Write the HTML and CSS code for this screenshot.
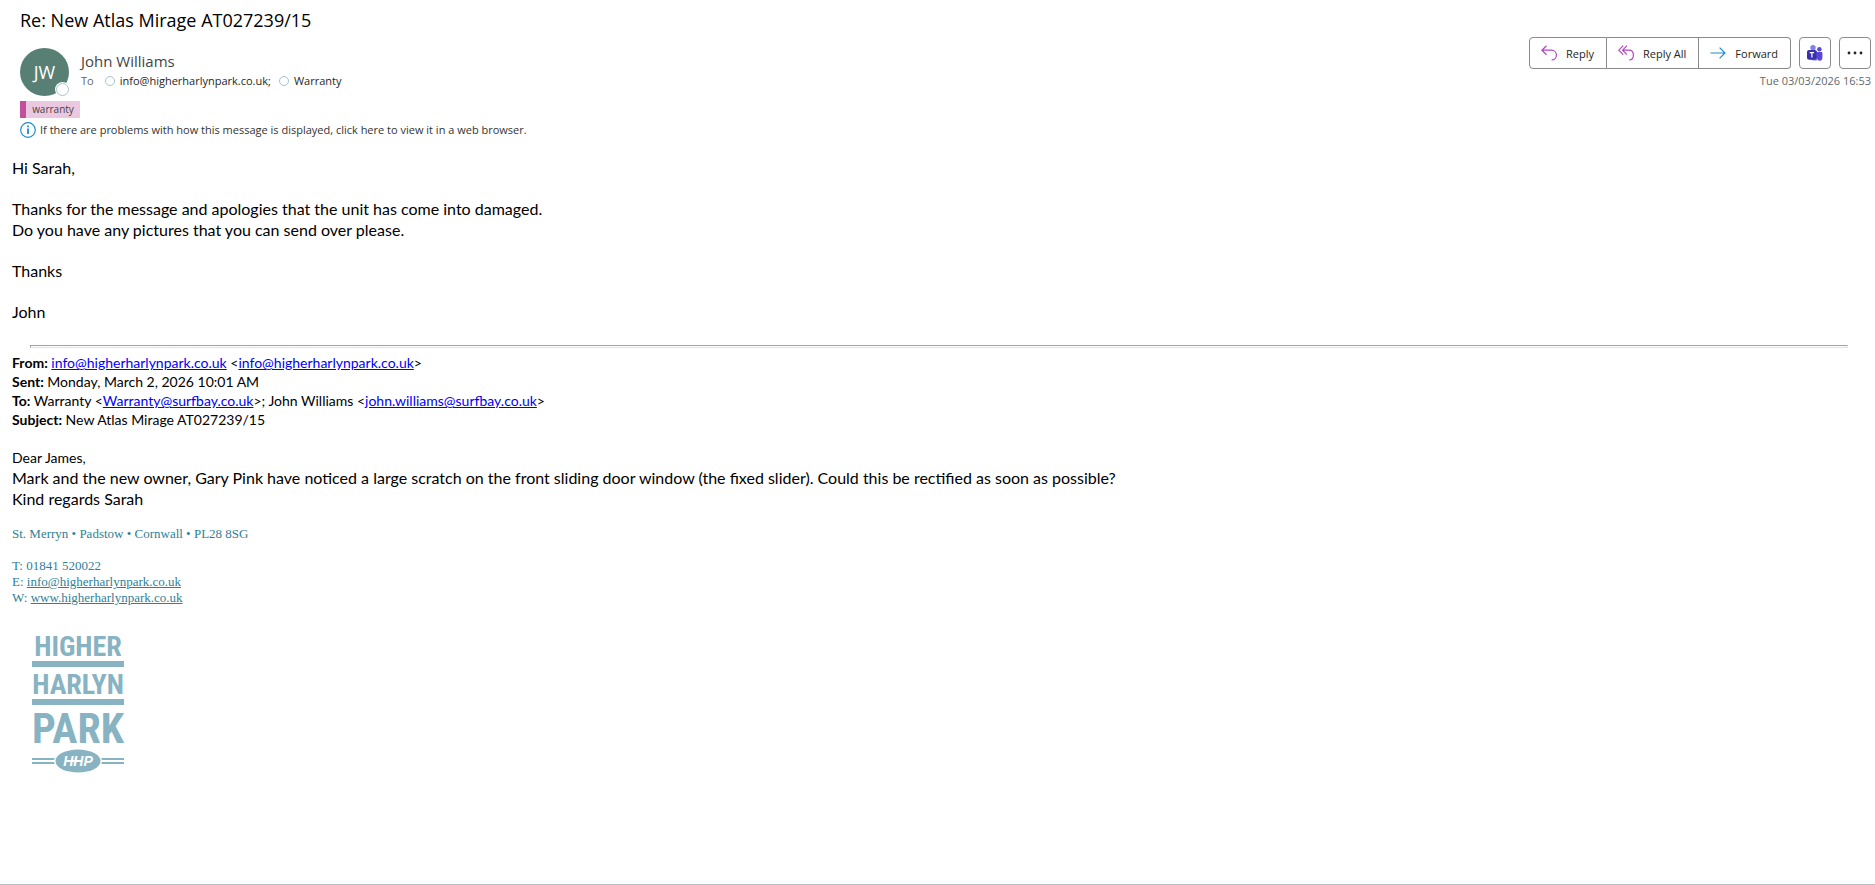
FILE: index.html
```
<!DOCTYPE html>
<html lang="en">
<head>
    <meta charset="UTF-8">
    <meta name="viewport" content="width=device-width, initial-scale=1.0">
    <title>Re: New Atlas Mirage AT027239/15</title>
    <link rel="stylesheet" href="styles.css">
</head>
<body>
    <header class="message-header">
        <h1 class="subject">Re: New Atlas Mirage AT027239/15</h1>
        <div class="header-row">
            <div class="sender">
                <div class="avatar">JW<span class="presence"></span></div>
                <div class="sender-info">
                    <div class="sender-name">John Williams</div>
                    <div class="recipients">
                        <span class="to-label">To</span>
                        <span class="dot"></span>
                        <span class="recipient">info@higherharlynpark.co.uk;</span>
                        <span class="dot"></span>
                        <span class="recipient">Warranty</span>
                    </div>
                </div>
            </div>
            <div class="header-side">
                <div class="actions">
                    <div class="button-group">
                        <button class="btn" type="button">
                            <svg class="icon" width="16" height="16" viewBox="0 0 16 16" fill="none" stroke="#b146c2" stroke-width="1.2">
                                <path d="M5.5 0.7L0.9 5.2L5.5 9.7M1 5.2H10.2C13.3 5.2 15.4 7.3 15.4 10.1C15.4 13 13.3 15 10.6 15"/>
                            </svg>
                            Reply
                        </button>
                        <button class="btn" type="button">
                            <svg class="icon" width="16" height="16" viewBox="0 0 16 16" fill="none" stroke="#b146c2" stroke-width="1.2">
                                <path d="M5.2 0.7L0.8 5.2L5.2 9.7M9 0.7L4.6 5.2L9 9.7M4.7 5.2H11C13.7 5.2 15.4 7.3 15.4 10.1C15.4 13 13.6 15 11.2 15"/>
                            </svg>
                            Reply All
                        </button>
                        <button class="btn" type="button">
                            <svg class="icon" width="16" height="16" viewBox="0 0 16 16" fill="none" stroke="#1e8bcd" stroke-width="1.2">
                                <path d="M0.5 8H15M9.6 2.6L15 8L9.6 13.4"/>
                            </svg>
                            Forward
                        </button>
                    </div>
                    <button class="btn btn-square" type="button" aria-label="Share to Teams">
                        <svg width="16" height="16" viewBox="0 0 16 16">
                            <circle cx="6" cy="2.8" r="2.7" fill="#7b83eb"/>
                            <circle cx="12.4" cy="4.2" r="2.2" fill="#5b45d6"/>
                            <path d="M3 6.2H10V15.6H6.6C4.6 15.6 3 14 3 12Z" fill="#748cfb"/>
                            <path d="M10 7H14.2C14.9 7 15.4 7.5 15.4 8.2V13C15.4 14.6 14.2 15.7 12.7 15.7C11.2 15.7 10 14.6 10 13Z" fill="#5b45d6"/>
                            <rect x="0" y="5" width="9.8" height="9.8" rx="2" fill="#3a2fb0"/>
                            <path d="M2.7 7.7H7.1M4.9 7.7V12.6" stroke="#fff" stroke-width="1.2"/>
                        </svg>
                    </button>
                    <button class="btn btn-square" type="button" aria-label="More actions">
                        <svg width="16" height="16" viewBox="0 0 16 16" fill="#242424">
                            <circle cx="2" cy="8" r="1.4"/>
                            <circle cx="8" cy="8" r="1.4"/>
                            <circle cx="14" cy="8" r="1.4"/>
                        </svg>
                    </button>
                </div>
                <div class="date">Tue 03/03/2026 16:53</div>
            </div>
        </div>
        <div class="category">warranty</div>
        <div class="info-bar">
            <svg width="16" height="16" viewBox="0 0 16 16">
                <circle cx="8" cy="8" r="7.3" fill="#fff" stroke="#1e8bcd" stroke-width="1.2"/>
                <path d="M8 6.6V12M8 3.6V5.3" stroke="#1e8bcd" stroke-width="1.8"/>
            </svg>
            <span>If there are problems with how this message is displayed, click here to view it in a web browser.</span>
        </div>
    </header>

    <main class="message-body">
        <p>Hi Sarah,</p>
        <p>Thanks for the message and apologies that the unit has come into damaged.<br>Do you have any pictures that you can send over please.</p>
        <p>Thanks</p>
        <p>John</p>

        <hr class="divider">

        <div class="quoted-header">
            <b>From:</b> <a href="mailto:info@higherharlynpark.co.uk">info@higherharlynpark.co.uk</a> &lt;<a href="mailto:info@higherharlynpark.co.uk">info@higherharlynpark.co.uk</a>&gt;<br>
            <b>Sent:</b> Monday, March 2, 2026 10:01 AM<br>
            <b>To:</b> Warranty &lt;<a href="mailto:Warranty@surfbay.co.uk">Warranty@surfbay.co.uk</a>&gt;; John Williams &lt;<a href="mailto:john.williams@surfbay.co.uk">john.williams@surfbay.co.uk</a>&gt;<br>
            <b>Subject:</b> New Atlas Mirage AT027239/15
        </div>

        <div class="quoted-text">
            <div class="greeting">Dear James,</div>
            <div>Mark and the new owner, Gary Pink have noticed a large scratch on the front sliding door window (the fixed slider). Could this be rectified as soon as possible?</div>
            <div>Kind regards Sarah</div>
        </div>

        <div class="signature">
            <p>St. Merryn • Padstow • Cornwall • PL28 8SG</p>
            <p>T: 01841 520022<br>E: <a href="mailto:info@higherharlynpark.co.uk">info@higherharlynpark.co.uk</a><br>W: <a href="http://www.higherharlynpark.co.uk">www.higherharlynpark.co.uk</a></p>
        </div>

        <svg class="logo" width="100" height="152" viewBox="-4 -10 100 152" fill="#88b3c2" role="img" aria-label="Higher Harlyn Park">
            <g class="logo-text" text-anchor="middle">
                <text class="logo-line" x="46" y="24">HIGHER</text>
                <text class="logo-line" x="46" y="62">HARLYN</text>
                <text class="logo-park" x="46" y="111">PARK</text>
            </g>
            <rect x="0" y="29" width="92" height="6"/>
            <rect x="0" y="67" width="92" height="6"/>
            <rect x="0" y="126" width="92" height="2"/>
            <rect x="0" y="130" width="92" height="2"/>
            <ellipse cx="46" cy="129" rx="24" ry="12" fill="#fff"/>
            <ellipse cx="46" cy="129" rx="22.5" ry="11.5"/>
            <text class="logo-badge" x="46" y="134" text-anchor="middle" fill="#fff">HHP</text>
            <path d="M36 129H50" stroke="#fff" stroke-width="2"/>
        </svg>
    </main>
</body>
</html>
```
FILE: styles.css
```
* {
    box-sizing: border-box;
}
body {
    margin: 0;
    min-height: 100vh;
    background-color: #fff;
    border-bottom: 1px solid #b4bcc4;
    color: #000;
    font-family: "Open Sans", "Noto Sans", sans-serif;
}

/* header */
.message-header {
    padding: 7px 4px 0 20px;
}
.subject {
    margin: 0 0 1px;
    font-size: 18px;
    font-weight: 400;
    line-height: 26px;
}
.header-row {
    display: flex;
    justify-content: space-between;
    align-items: flex-start;
    height: 64px;
}
.sender {
    display: flex;
    gap: 12px;
    padding-top: 14px;
}
.avatar {
    position: relative;
    width: 49px;
    height: 48px;
    border-radius: 50%;
    background-color: #587f74;
    color: #fff;
    font-size: 18px;
    line-height: 48px;
    text-align: center;
}
.presence {
    position: absolute;
    right: 0;
    bottom: 0;
    width: 13px;
    height: 13px;
    border: 1px solid #a5c5cd;
    border-radius: 50%;
    background-color: #fff;
    box-shadow: 0 0 0 1px #fff;
}
.sender-name {
    padding-top: 3px;
    color: #444;
    font-size: 15px;
    line-height: 20px;
}
.recipients {
    display: flex;
    align-items: center;
    color: #262626;
    font-size: 11px;
    line-height: 20px;
}
.to-label {
    margin-right: 11px;
    color: #666;
}
.dot {
    width: 10px;
    height: 10px;
    margin-right: 5px;
    border: 1px solid #a5c5cd;
    border-radius: 50%;
}
.recipient {
    margin-right: 8px;
}
.header-side {
    display: flex;
    flex-direction: column;
    align-items: flex-end;
    gap: 3px;
    padding-top: 3px;
}
.actions {
    display: flex;
    gap: 8px;
}
.button-group {
    display: flex;
}
.btn {
    display: flex;
    align-items: center;
    gap: 9px;
    height: 32px;
    padding: 0 12px 0 11px;
    border: 1px solid #8a8a8a;
    background-color: #fff;
    color: #242424;
    font-family: inherit;
    font-size: 11px;
}
.button-group .btn + .btn {
    border-left: none;
}
.button-group .btn:first-child {
    border-radius: 4px 0 0 4px;
}
.button-group .btn:last-child {
    border-radius: 0 4px 4px 0;
}
.btn-square {
    justify-content: center;
    width: 32px;
    padding: 0;
    border-radius: 4px;
}
.date {
    color: #666;
    font-size: 11px;
    line-height: 18px;
}
.category {
    width: 60px;
    margin-top: 3px;
    border-left: 6px solid #c24f9b;
    background-color: #ecc8e0;
    color: #444;
    font-size: 10px;
    line-height: 17px;
    text-align: center;
}
.info-bar {
    display: flex;
    align-items: center;
    gap: 4px;
    margin-top: 3px;
    color: #333;
    font-size: 11px;
    line-height: 18px;
}

/* message */
.message-body {
    padding: 18px 12px 0;
    font-family: Lato, sans-serif;
    font-size: 16px;
    line-height: 21px;
}
.message-body p {
    margin: 0 0 20px;
}
.divider {
    height: 3px;
    margin: 23px 15px 5px 18px;
    border: 1px solid;
    border-color: #a0a0a0 #e3e3e3 #e3e3e3 #a0a0a0;
}
.quoted-header {
    font-size: 14px;
    line-height: 19px;
}
.quoted-header a {
    color: #0000ff;
}
.quoted-text {
    margin-top: 19px;
}
.greeting {
    font-size: 14px;
    line-height: 19px;
}
.signature {
    margin-top: 17px;
    color: #2f7f96;
    font-family: "Liberation Serif", serif;
    font-size: 13px;
    line-height: 16px;
}
.message-body .signature p {
    margin: 0 0 16px;
}
.signature a {
    color: inherit;
}
.logo {
    display: block;
    margin: 16px;
}
.logo-text {
    font-family: "Roboto Condensed", "Liberation Sans Narrow", "DejaVu Sans Condensed", sans-serif;
    font-weight: 700;
}
.logo-line {
    font-size: 28px;
}
.logo-park {
    font-size: 42px;
}
.logo-badge {
    font-family: "Liberation Sans", sans-serif;
    font-size: 14px;
    font-style: italic;
    font-weight: 700;
}
```
